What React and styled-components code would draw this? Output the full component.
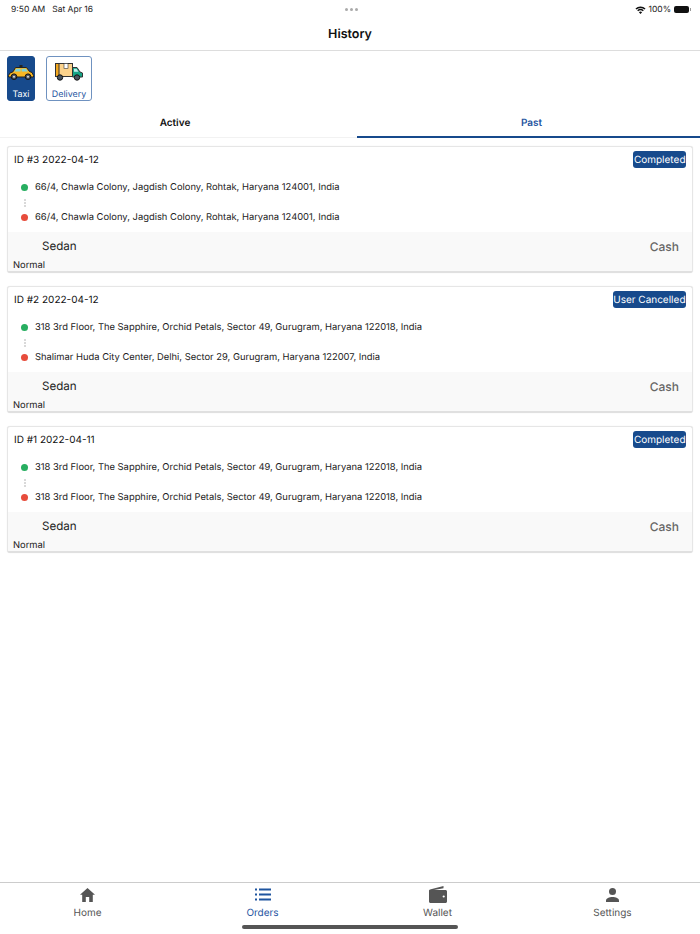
import React from "react";
import styled, { createGlobalStyle } from "styled-components";

const navy = "#174a8c";
const linkBlue = "#1f559f";

const orders = [
  {
    id: 3,
    date: "2022-04-12",
    status: "Completed",
    from: "66/4, Chawla Colony, Jagdish Colony, Rohtak, Haryana 124001, India",
    to: "66/4, Chawla Colony, Jagdish Colony, Rohtak, Haryana 124001, India",
  },
  {
    id: 2,
    date: "2022-04-12",
    status: "User Cancelled",
    from: "318 3rd Floor, The Sapphire, Orchid Petals, Sector 49, Gurugram, Haryana 122018, India",
    to: "Shalimar Huda City Center, Delhi, Sector 29, Gurugram, Haryana 122007, India",
  },
  {
    id: 1,
    date: "2022-04-11",
    status: "Completed",
    from: "318 3rd Floor, The Sapphire, Orchid Petals, Sector 49, Gurugram, Haryana 122018, India",
    to: "318 3rd Floor, The Sapphire, Orchid Petals, Sector 49, Gurugram, Haryana 122018, India",
  },
];

const TaxiIcon = () => (
  <svg width="26" height="15" viewBox="0 0 26 15">
    <rect x="11.500" y="0" width="3" height="2.500" fill="#222" />
    <path d="M7.500 2.500h11l3 4 2.500 1 1.500 3v1.500H.5V10.500l1.500-2.500 3-1.200z" fill="#f8b824" stroke="#222" strokeWidth="1" />
    <path d="M8.300 3.800h4.200v2.800H6.300zM13.700 3.800h4.200l2 2.800h-6.200z" fill="#7fd4d8" />
    <circle cx="6" cy="11.700" r="2.800" fill="#4a5560" stroke="#111" />
    <circle cx="20" cy="11.700" r="2.800" fill="#4a5560" stroke="#111" />
    <circle cx="6" cy="11.700" r="1" fill="#ddd" />
    <circle cx="20" cy="11.700" r="1" fill="#ddd" />
  </svg>
);

const TruckIcon = () => (
  <svg width="28" height="18" viewBox="0 0 28 18">
    <rect x="0.500" y="0.500" width="17" height="13" fill="#fcd38c" stroke="#333" />
    <rect x="0.500" y="0.500" width="3.500" height="13" fill="#f3a81f" stroke="#333" />
    <rect x="9" y="0.500" width="4" height="5" fill="#fff" stroke="#333" strokeWidth="0.600" />
    <path d="M17.500 4.500h4.500l3 4.500 2.500 1v4h-10z" fill="#14a586" stroke="#333" />
    <path d="M19 5.800h2.500l2 3H19z" fill="#bfeeee" />
    <circle cx="5" cy="14.500" r="2.700" fill="#4a5560" stroke="#111" />
    <circle cx="22" cy="14.500" r="2.700" fill="#4a5560" stroke="#111" />
  </svg>
);

const HomeIcon = () => (
  <svg width="15" height="14" viewBox="0 0 15 14" fill="#555">
    <path d="M7.500 0 0 6.800h2.200V14h3.600V9h3.400v5h3.600V6.800H15z" />
  </svg>
);

const ListIcon = () => (
  <svg width="16" height="13" viewBox="0 0 16 13" fill={linkBlue}>
    <rect x="0" y="0.500" width="2" height="2" />
    <rect x="0" y="5.500" width="2" height="2" />
    <rect x="0" y="10.500" width="2" height="2" />
    <rect x="4" y="0.500" width="12" height="2" />
    <rect x="4" y="5.500" width="12" height="2" />
    <rect x="4" y="10.500" width="12" height="2" />
  </svg>
);

const WalletIcon = () => (
  <svg width="18" height="17" viewBox="0 0 18 17" fill="#555">
    <path d="M1 3.400 14.500 0v2.200L5 4h11.500c.8 0 1.500.7 1.500 1.500v10c0 .8-.7 1.500-1.500 1.500h-15C.7 17 0 16.300 0 15.500v-11C0 4 .4 3.600 1 3.400z" />
    <circle cx="14.700" cy="10.500" r="1.100" fill="#fff" />
  </svg>
);

const PersonIcon = () => (
  <svg width="13" height="14" viewBox="0 0 13 14" fill="#555">
    <circle cx="6.500" cy="3.500" r="3.500" />
    <path d="M0 14v-1.500C0 10.300 3.200 9 6.500 9s6.500 1.300 6.500 3.500V14z" />
  </svg>
);

const WifiIcon = () => (
  <svg width="11" height="8" viewBox="0 0 12 9" fill="#111">
    <path d="M6 9 4.200 6.900a2.700 2.700 0 0 1 3.600 0zM3.400 6 2.300 4.800a5.600 5.600 0 0 1 7.400 0L8.600 6a4 4 0 0 0-5.200 0zM1.500 3.900.3 2.700a8.500 8.500 0 0 1 11.400 0l-1.200 1.200a6.800 6.800 0 0 0-9 0z" />
  </svg>
);

export default function App() {
  return (
    <>
      <GlobalStyle />
      <Page>
        <StatusBar>
          <StatusTime>
            <span>9:50 AM</span>
            <span>Sat Apr 16</span>
          </StatusTime>
          <StatusDots>
            <i />
            <i />
            <i />
          </StatusDots>
          <StatusRight>
            <WifiIcon />
            <span>100%</span>
            <Battery />
          </StatusRight>
        </StatusBar>

        <Header>History</Header>

        <ServiceRow>
          <ServiceButton $active>
            <TaxiIcon />
            <span>Taxi</span>
          </ServiceButton>
          <ServiceButton>
            <TruckIcon />
            <span>Delivery</span>
          </ServiceButton>
        </ServiceRow>

        <Tabs>
          <Tab>Active</Tab>
          <Tab $active>Past</Tab>
        </Tabs>

        <List>
          {orders.map((order) => (
            <Card key={order.id}>
              <CardTop>
                <OrderId>
                  ID #{order.id} {order.date}
                </OrderId>
                <Badge>{order.status}</Badge>
              </CardTop>
              <Route>
                <Stop>
                  <Dot $color="#27ae60" />
                  {order.from}
                </Stop>
                <Dots>
                  <i />
                  <i />
                  <i />
                </Dots>
                <Stop>
                  <Dot $color="#e74c3c" />
                  {order.to}
                </Stop>
              </Route>
              <CardFooter>
                <FooterRow>
                  <Vehicle>Sedan</Vehicle>
                  <Payment>Cash</Payment>
                </FooterRow>
                <RideType>Normal</RideType>
              </CardFooter>
            </Card>
          ))}
        </List>

        <TabBar>
          <TabItem>
            <TabIcon>
              <HomeIcon />
            </TabIcon>
            Home
          </TabItem>
          <TabItem $active>
            <TabIcon>
              <ListIcon />
            </TabIcon>
            Orders
          </TabItem>
          <TabItem>
            <TabIcon>
              <WalletIcon />
            </TabIcon>
            Wallet
          </TabItem>
          <TabItem>
            <TabIcon>
              <PersonIcon />
            </TabIcon>
            Settings
          </TabItem>
          <HomeIndicator />
        </TabBar>
      </Page>
    </>
  );
}

const GlobalStyle = createGlobalStyle`
  html, body {
    margin: 0;
    background: #fff;
  }
  * {
    box-sizing: border-box;
  }
`;

const Page = styled.div`
  width: 700px;
  height: 934px;
  display: flex;
  flex-direction: column;
  overflow: hidden;
  background: #fff;
  color: #111;
  font-family: Inter, "Liberation Sans", sans-serif;
  text-rendering: geometricPrecision;
`;

const StatusBar = styled.div`
  height: 18px;
  padding: 1px 9px 0 11px;
  display: flex;
  align-items: center;
  justify-content: space-between;
  font-size: 8.5px;
  color: #222;
`;

const StatusTime = styled.div`
  display: flex;
  gap: 7px;
  width: 170px;
`;

const StatusDots = styled.div`
  display: flex;
  gap: 2px;
  margin-top: -1px;

  i {
    width: 3px;
    height: 3px;
    border-radius: 50%;
    background: #aaa;
  }
`;

const StatusRight = styled.div`
  width: 170px;
  display: flex;
  align-items: center;
  justify-content: flex-end;
  gap: 2px;
`;

const Battery = styled.div`
  width: 15px;
  height: 7px;
  margin: 0 2px 0 1px;
  border-radius: 2px;
  background: #111;
  position: relative;

  &::after {
    content: "";
    position: absolute;
    right: -2px;
    top: 2px;
    width: 1px;
    height: 3px;
    background: #999;
  }
`;

const Header = styled.div`
  height: 33px;
  display: flex;
  align-items: center;
  justify-content: center;
  border-bottom: 1px solid #ddd;
  font-size: 12.5px;
  font-weight: 600;
`;

const ServiceRow = styled.div`
  padding: 5px 7px 0;
  display: flex;
  gap: 11px;
`;

const ServiceButton = styled.div`
  height: 45px;
  padding: ${(props) => (props.$active ? "8px" : "6px")} 0 0;
  display: flex;
  flex-direction: column;
  align-items: center;
  justify-content: space-between;
  border-radius: 3px;
  border: 1px solid ${(props) => (props.$active ? navy : "#6f92c0")};
  background: ${(props) => (props.$active ? navy : "#fff")};
  color: ${(props) => (props.$active ? "#fff" : linkBlue)};
  font-size: 8.9px;
  width: ${(props) => (props.$active ? "28px" : "46px")};

  svg {
    flex-shrink: 0;
  }
`;

const Tabs = styled.div`
  height: 37px;
  display: grid;
  grid-template-columns: 357px 343px;
  border-bottom: 1px solid #f2f2f2;
`;

const Tab = styled.div`
  display: flex;
  align-items: center;
  justify-content: center;
  padding-top: 9px;
  padding-left: ${(props) => (props.$active ? "6px" : "0")};
  padding-right: ${(props) => (props.$active ? "0" : "7px")};
  font-size: 10px;
  font-weight: 600;
  color: ${(props) => (props.$active ? linkBlue : "#111")};
  border-bottom: 2px solid ${(props) => (props.$active ? navy : "transparent")};
  margin-bottom: -1px;
`;

const List = styled.div`
  flex: 1;
  padding: 8px 7px 0;
  display: flex;
  flex-direction: column;
  gap: 13px;
`;

const Card = styled.div`
  height: 127px;
  display: flex;
  flex-direction: column;
  overflow: hidden;
  border: 1px solid #e6e6e6;
  border-bottom: 2px solid #e0e0e0;
  border-radius: 3px;
  background: #fff;
  box-shadow: 0 0 1px rgba(0, 0, 0, 0.12);
`;

const CardTop = styled.div`
  height: 30.5px;
  flex-shrink: 0;
  padding: 4px 6px 0;
  display: flex;
  justify-content: space-between;
  align-items: flex-start;
`;

const OrderId = styled.div`
  margin: 2px 0 0 0;
  font-size: 10px;
  line-height: 14px;
`;

const Badge = styled.div`
  height: 17px;
  padding: 0 0.5px;
  display: flex;
  align-items: center;
  border-radius: 3px;
  background: ${navy};
  color: #fff;
  font-size: 10px;
`;

const Route = styled.div`
  height: 54.5px;
  flex-shrink: 0;
  padding-left: 13px;
  display: flex;
  flex-direction: column;
`;

const Stop = styled.div`
  height: 20px;
  display: flex;
  align-items: center;
  gap: 7px;
  font-size: 9.4px;
  color: #222;
`;

const Dot = styled.span`
  width: 7px;
  height: 7px;
  border-radius: 50%;
  background: ${(props) => props.$color};
`;

const Dots = styled.div`
  height: 10px;
  width: 7px;
  display: flex;
  flex-direction: column;
  align-items: center;
  justify-content: center;
  gap: 1px;

  i {
    width: 2px;
    height: 2px;
    border-radius: 50%;
    background: #ccc;
  }
`;

const CardFooter = styled.div`
  flex: 1;
  padding: 5px 5px 0;
  background: #f9f9f9;
`;

const FooterRow = styled.div`
  height: 18px;
  padding: 0 8px 0 29px;
  display: flex;
  align-items: center;
  justify-content: space-between;
`;

const Vehicle = styled.div`
  font-size: 11.6px;
  color: #222;
`;

const Payment = styled.div`
  font-size: 12px;
  font-weight: 500;
  color: #666;
`;

const RideType = styled.div`
  margin-top: 6px;
  font-size: 9.4px;
  line-height: 10px;
  color: #222;
`;

const TabBar = styled.div`
  height: 52px;
  display: grid;
  grid-template-columns: repeat(4, 1fr);
  position: relative;
  border-top: 1px solid #ccc;
`;

const TabItem = styled.div`
  display: flex;
  flex-direction: column;
  align-items: center;
  padding-top: 2px;
  font-size: 10px;
  color: ${(props) => (props.$active ? linkBlue : "#555")};
`;

const TabIcon = styled.div`
  height: 19px;
  margin-bottom: 3px;
  display: flex;
  align-items: center;
  justify-content: center;
`;

const HomeIndicator = styled.div`
  position: absolute;
  left: 242px;
  bottom: 5px;
  width: 216px;
  height: 4px;
  border-radius: 2px;
  background: #555;
`;
